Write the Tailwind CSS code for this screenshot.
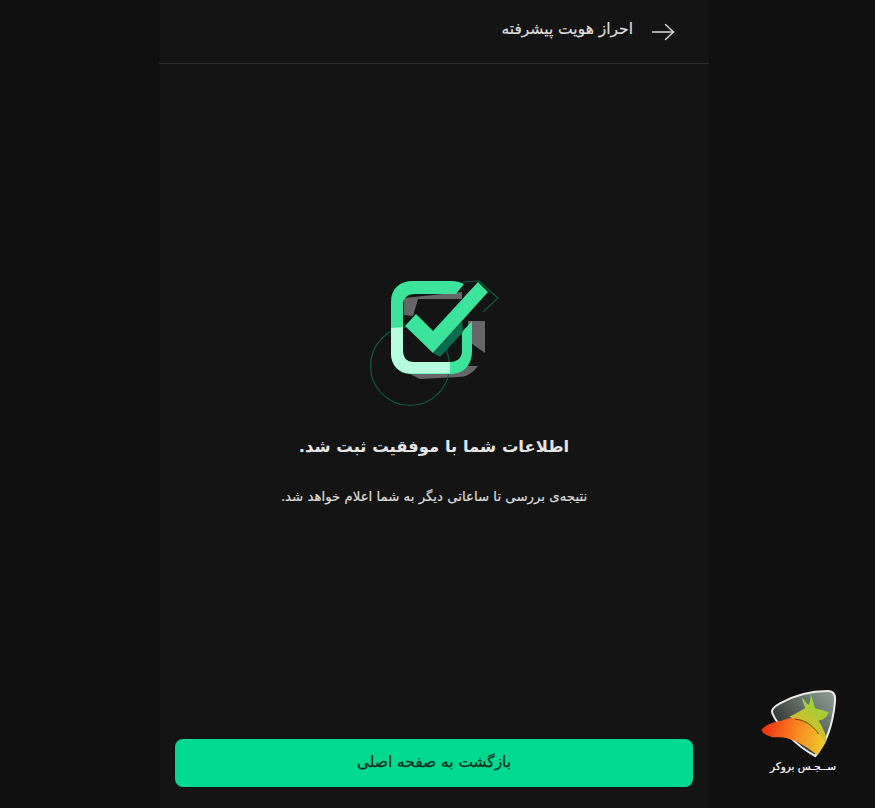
<!DOCTYPE html>
<html lang="fa" dir="rtl">
<head>
  <meta charset="UTF-8">
  <meta name="viewport" content="width=device-width, initial-scale=1.0">
  <title>احراز هویت پیشرفته</title>
  <script src="https://cdn.jsdelivr.net/npm/@tailwindcss/browser@4"></script>
</head>
<body class="bg-[#101010] font-['DejaVu_Sans','Noto_Sans',sans-serif] overflow-hidden">
  <div class="relative h-[808px] flex justify-center pr-[7px]">
    <!-- Panel -->
    <main class="w-[550px] h-full bg-[#141414] flex flex-col">
      <!-- Header -->
      <header class="h-[64px] shrink-0 flex items-center gap-[18px] pr-[34px] border-b border-[#2c2c2c]">
        <svg class="w-[24px] h-[24px] text-[#dcdcdc]" viewBox="0 0 24 24" fill="none" stroke="currentColor" stroke-width="1.4" stroke-linecap="round" stroke-linejoin="round">
          <path d="M1.5 12H22.5"/>
          <path d="M14.5 4.5L22.5 12L14.5 19.5"/>
        </svg>
        <h1 class="text-[15.500px] text-[#dedede] -mt-[3px] [-webkit-text-stroke:0.2px]">احراز هویت پیشرفته</h1>
      </header>

      <!-- Success message -->
      <section class="flex-1 flex flex-col items-center pt-[205px]">
        <svg class="w-[160px] h-[145px] mr-[8px]" viewBox="0 0 160 145" fill="none">
          <!-- grey shadow -->
          <path d="M54 29L112 23V30H68L63 47L54 46Z" fill="#666"/>
          <path d="M118 52L135 52V84L118 72Z" fill="#666"/>
          <path d="M60 105L118 97L128 97C122 105 116 108 108 108L70 110Z" fill="#666"/>
          <!-- thin circle -->
          <circle cx="60" cy="97" r="39.5" stroke="#0f5c45" stroke-width="1.2"/>
          <!-- thin corner line -->
          <path d="M113 13L129 12L148 29L133 43" stroke="#0f5c45" stroke-width="1.2"/>
          <!-- rounded square -->
          <path d="M122 52V82C122 96 114 105 100 105H61C49 105 41 96 41 84V33C41 20 49 12 63 12H101C106 12 110 13 114 15L106 25H65C57 25 53 29 53 36V82C53 89 57 93 63 93H100C107 93 112 89 112 82V63Z" fill="#3ce39a"/>
          <path d="M41 59L53 58V82C53 89 57 93 63 93H100V104.500H61C49 105 41 96 41 84Z" fill="#b5fbdd"/>
          <!-- check mark -->
          <path d="M55 57L66 45L83 62L128 13L138 23L83 84Z" fill="#3ce39a"/>
          <path d="M83 84L112 52L113 63L90 88Z" fill="#0a6b4f"/>
        </svg>
        <h2 class="mt-[20px] text-[16.400px] leading-[26px] font-bold text-[#e4e4e4]">اطلاعات شما با موفقیت ثبت شد.</h2>
        <p class="mt-[27px] text-[13.300px] leading-[20px] text-[#dcdcdc] [-webkit-text-stroke:0.2px]">نتیجه‌ی بررسی تا ساعاتی دیگر به شما اعلام خواهد شد.</p>
      </section>

      <!-- Back button -->
      <div class="px-[16px] pb-[21px]">
        <button class="w-full h-[48px] rounded-[8px] bg-[#00d990] text-[15.400px] text-[#0d2d22] [-webkit-text-stroke:0.25px]">بازگشت به صفحه اصلی</button>
      </div>
    </main>

    <!-- Broker logo -->
    <div class="absolute left-[740px] top-[680px] w-[110px] flex flex-col items-center">
      <svg class="w-[110px] h-[80px]" viewBox="0 0 330 240" fill="none">
        <defs>
          <linearGradient id="shield" x1="100" y1="200" x2="270" y2="40" gradientUnits="userSpaceOnUse">
            <stop offset="0" stop-color="#161a18"/>
            <stop offset="1" stop-color="#8d9a93"/>
          </linearGradient>
          <linearGradient id="bull" x1="64" y1="150" x2="250" y2="190" gradientUnits="userSpaceOnUse">
            <stop offset="0" stop-color="#ee2c12"/>
            <stop offset="0.5" stop-color="#f8801d"/>
            <stop offset="1" stop-color="#eec72c"/>
          </linearGradient>
          <linearGradient id="dog" x1="170" y1="170" x2="240" y2="60" gradientUnits="userSpaceOnUse">
            <stop offset="0" stop-color="#f0b424"/>
            <stop offset="1" stop-color="#8fd43c"/>
          </linearGradient>
        </defs>
        <path d="M97 100C92 90 105 78 120 70C165 45 210 33 262 33C282 33 287 45 285 65C280 120 262 185 226 228C170 200 115 140 97 100Z" fill="url(#shield)" stroke="#ececec" stroke-width="6"/>
        <path d="M148 110C170 100 185 90 196 84C190 70 186 60 186 52C195 64 201 72 206 75C212 65 213 50 210 40C220 60 222 75 226 85L266 96C262 112 248 120 236 122C248 140 258 165 260 180L232 226C225 190 200 130 148 110Z" fill="url(#dog)"/>
        <path d="M64 150C75 136 95 126 125 122C150 110 172 112 196 124C220 140 245 170 256 188L232 226C205 205 170 178 125 172L95 172C85 165 70 165 64 150Z" fill="url(#bull)"/>
        <path d="M165 118C190 118 218 135 236 162" stroke="#1a1a10" stroke-width="2"/>
      </svg>
      <span class="-mt-[1px] ml-[16px] text-[10.500px] leading-[14px] text-white whitespace-nowrap [-webkit-text-stroke:0.2px]">ســجـس بروکر</span>
    </div>
  </div>
</body>
</html>
